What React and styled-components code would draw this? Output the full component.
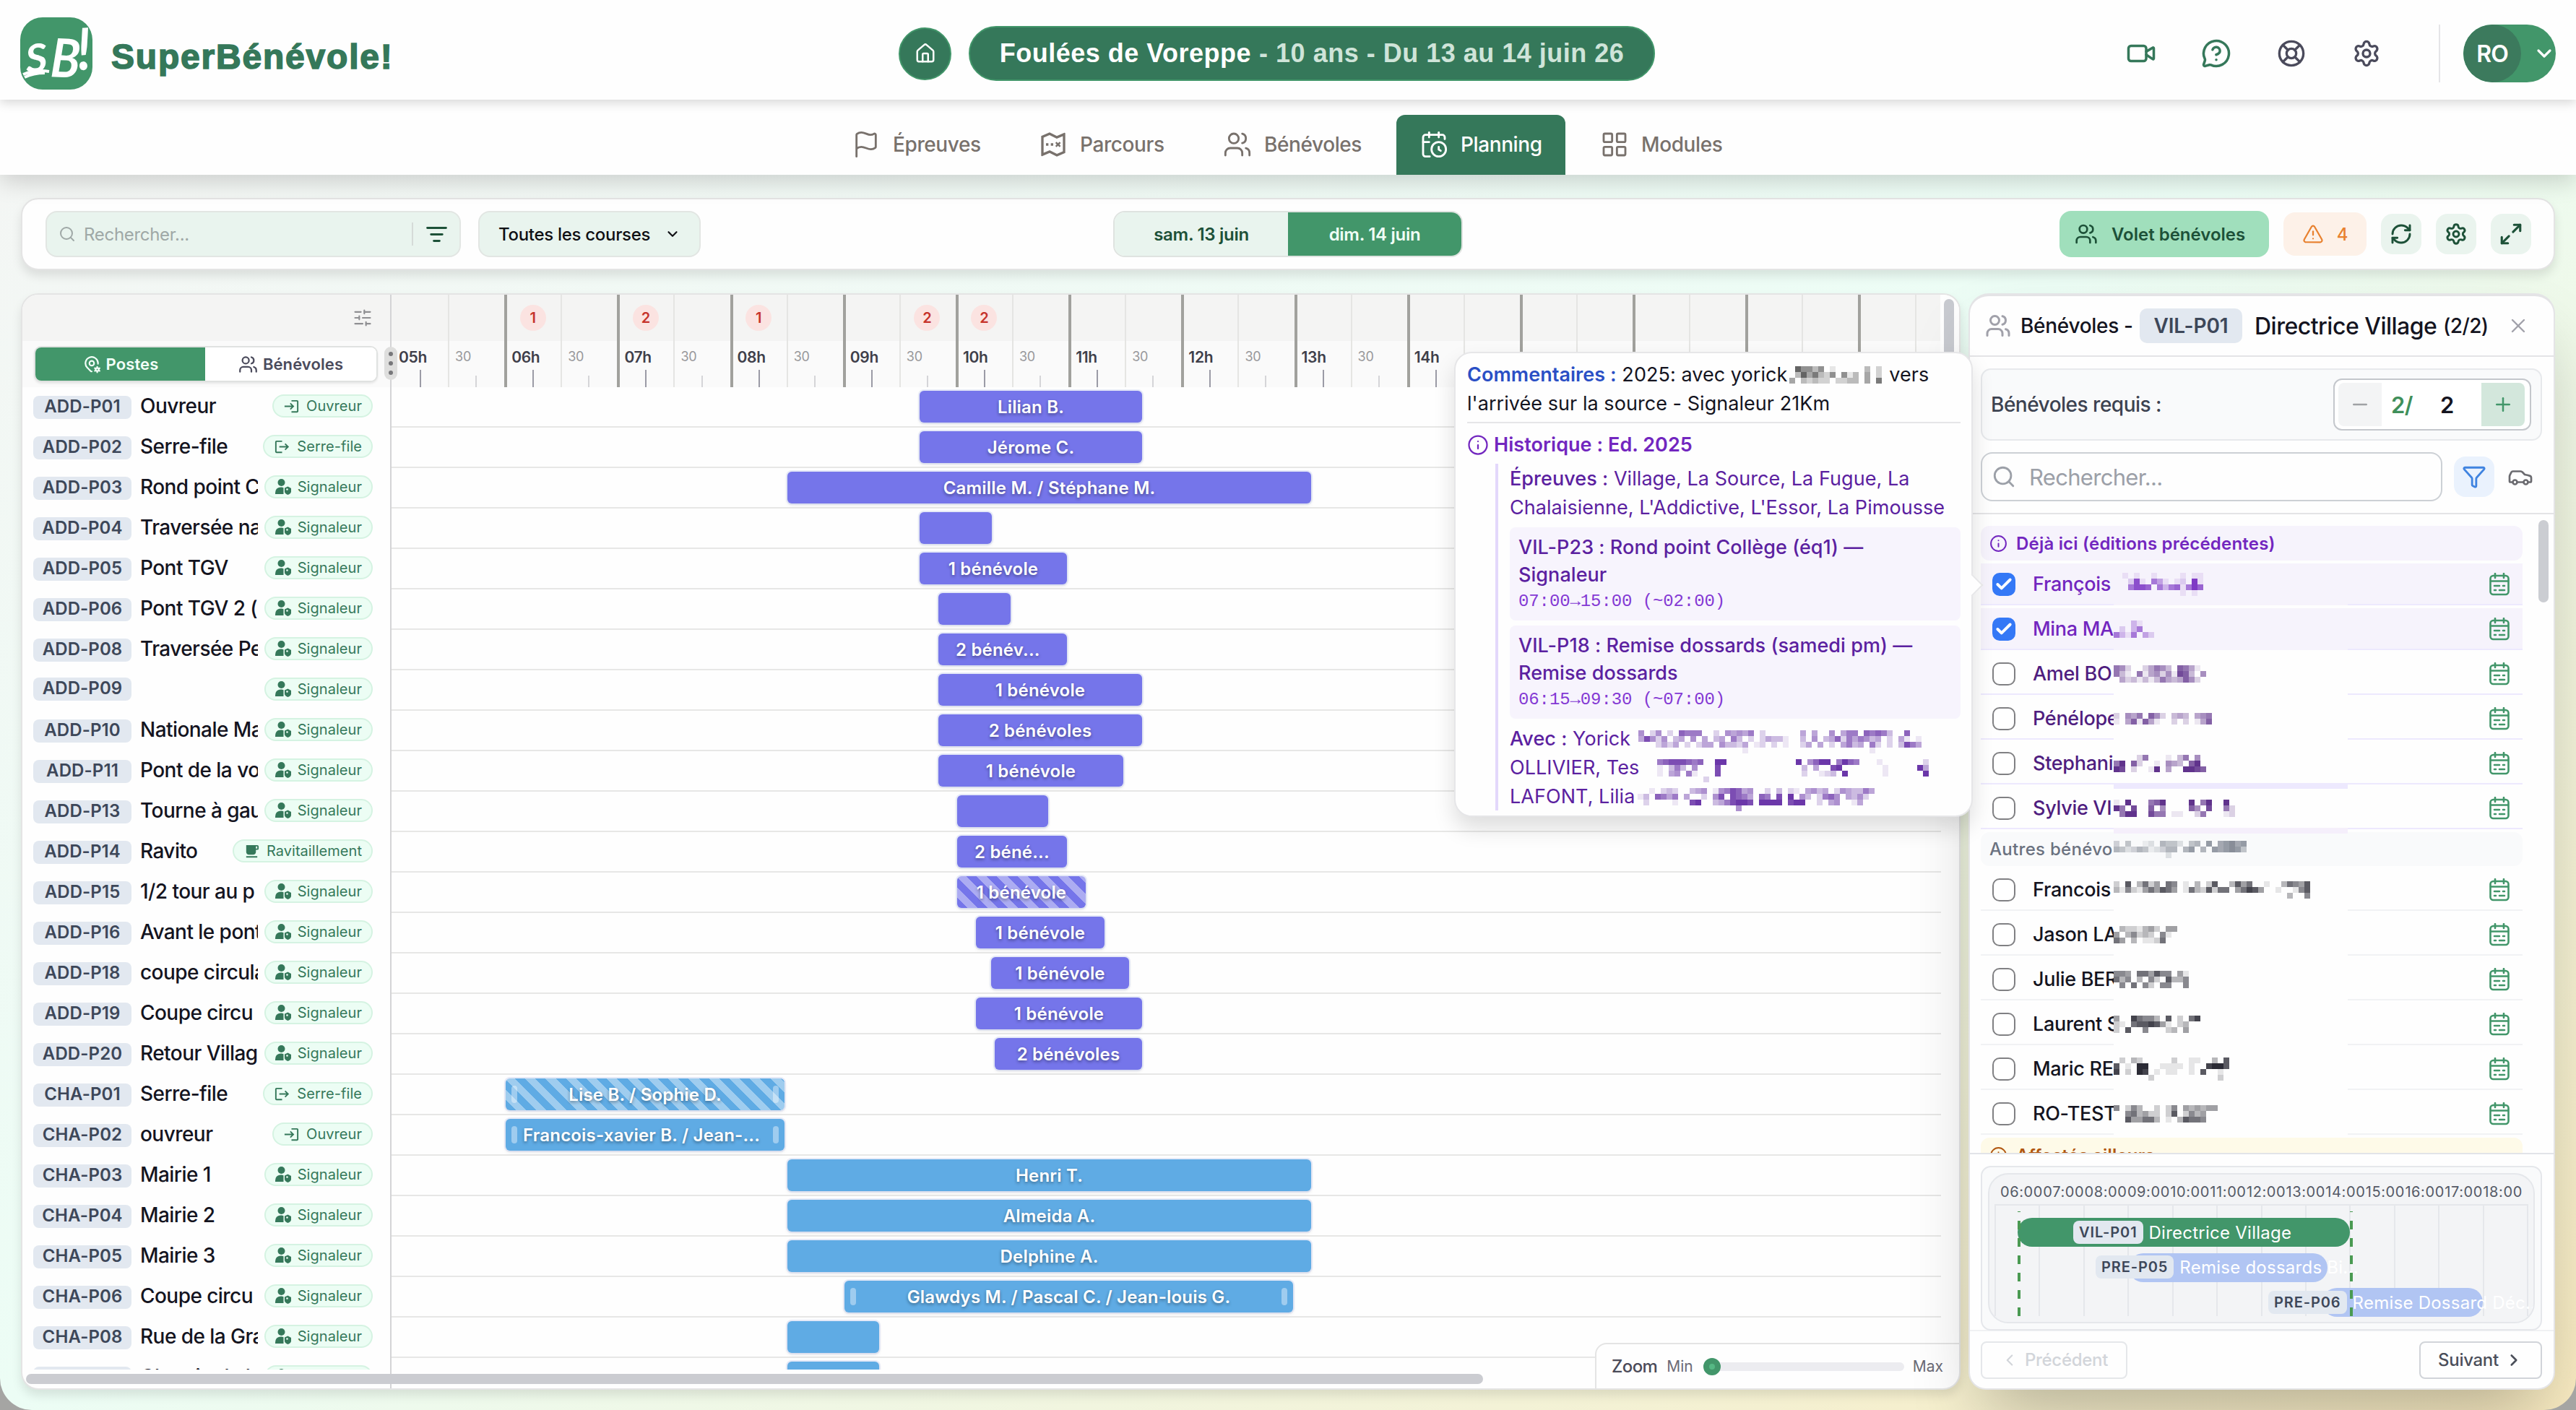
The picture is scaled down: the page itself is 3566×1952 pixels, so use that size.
import React, { useState } from 'react'
import styled, { createGlobalStyle, css } from 'styled-components'
import {
    Users, CalendarClock, Flag, LayoutGrid, Video, MessageCircleQuestion, LifeBuoy, Settings,
    House, ChevronDown, ChevronLeft, ChevronRight, Search, RefreshCw, Maximize2, TriangleAlert,
    X, Minus, Plus, Funnel, Car, Info, SlidersHorizontal, ListFilter, Check,
} from 'lucide-react'
import { RiTreasureMapLine } from 'react-icons/ri'
import { TbMapPinCog } from 'react-icons/tb'
import { MdLocalCafe, MdLogin, MdLogout } from 'react-icons/md'

const TIMELINE_LEFT = 542
const HALF_HOUR = 78.1

const SIG = 'Signaleur'

// [code, name, role, bar start, bar end, bar label, options]
const rows = [
    ['ADD-P01', 'Ouvreur', 'Ouvreur', 1273, 1581, 'Lilian B.'],
    ['ADD-P02', 'Serre-file', 'Serre-file', 1273, 1581, 'Jérome C.'],
    ['ADD-P03', 'Rond point C', SIG, 1090, 1815, 'Camille M. / Stéphane M.'],
    ['ADD-P04', 'Traversée na', SIG, 1273, 1373, ''],
    ['ADD-P05', 'Pont TGV', SIG, 1273, 1477, '1 bénévole'],
    ['ADD-P06', 'Pont TGV 2 (', SIG, 1299, 1399, ''],
    ['ADD-P08', 'Traversée Pe', SIG, 1299, 1477, '2 bénév...', { start: true }],
    ['ADD-P09', '', SIG, 1299, 1581, '1 bénévole'],
    ['ADD-P10', 'Nationale Ma', SIG, 1299, 1581, '2 bénévoles'],
    ['ADD-P11', 'Pont de la vo', SIG, 1299, 1555, '1 bénévole'],
    ['ADD-P13', 'Tourne à gau', SIG, 1325, 1451, ''],
    ['ADD-P14', 'Ravito', 'Ravitaillement', 1325, 1477, '2 béné...', { start: true }],
    ['ADD-P15', '1/2 tour au p', SIG, 1325, 1503, '1 bénévole', { striped: true }],
    ['ADD-P16', 'Avant le pont', SIG, 1351, 1529, '1 bénévole'],
    ['ADD-P18', 'coupe circula', SIG, 1372, 1563, '1 bénévole'],
    ['ADD-P19', 'Coupe circu', SIG, 1351, 1581, '1 bénévole'],
    ['ADD-P20', 'Retour Villag', SIG, 1377, 1581, '2 bénévoles'],
    ['CHA-P01', 'Serre-file', 'Serre-file', 700, 1086, 'Lise B. / Sophie D.', { striped: true, grips: true }],
    ['CHA-P02', 'ouvreur', 'Ouvreur', 700, 1086, 'Francois-xavier B. / Jean-...', { start: true, grips: true }],
    ['CHA-P03', 'Mairie 1', SIG, 1090, 1815, 'Henri T.'],
    ['CHA-P04', 'Mairie 2', SIG, 1090, 1815, 'Almeida A.'],
    ['CHA-P05', 'Mairie 3', SIG, 1090, 1815, 'Delphine A.'],
    ['CHA-P06', 'Coupe circu', SIG, 1169, 1790, 'Glawdys M. / Pascal C. / Jean-louis G.', { grips: true }],
    ['CHA-P08', 'Rue de la Gra', SIG, 1090, 1217, ''],
    ['CHA-P09', 'Chemin de l', SIG, 1090, 1217, ''],
]

const slots = Array.from({ length: 28 }, (_, i) => ({
    hour: i % 2 === 0,
    label: i % 2 === 0 ? String(5 + i / 2).padStart(2, '0') + 'h' : '30',
    count: { 2: 1, 4: 2, 6: 1, 9: 2, 10: 2 }[i],
}))

const known = [
    { name: 'François', checked: true, x: 12, mask: ['1.1..1....1.11', '.281.641.12.91', '.6887.63671697', '..........1.1.'] },
    { name: 'Mina MA', checked: true, x: 0, mask: ['...31', '.2.36', '6316.42'] },
    { name: 'Amel BO', x: 0, mask: ['652..24653.7641', '631.6145251873.5', '.42313136434752'] },
    { name: 'Pénélope', x: 0, mask: ['2.546.752.343.456', '1.471741..2.2.147'] },
    { name: 'Stephani', x: 0, mask: ['....26...1.36.5', '69.72..1.543.79', '98.2..19.4..9987'], band: '#ede9fe' },
    { name: 'Sylvie VI', x: 0, mask: ['1.9...679....9.69..9', '96.8..7.5....75.8..62', '.699..866.11..26...12'], band: '#f5effb' },
]

const others = [
    { name: 'Francois', x: 0, mask: ['2.7.3624.65.1.3.27..3746..1..36547', '31521464764.16327266.46874..1..157', '..............................3..5'] },
    { name: 'Jason LA', x: 0, mask: ['.3221342.44', '4.35232.51.', '64.3.1126..'] },
    { name: 'Julie BER', x: 0, mask: ['554.664755.41', '635.3.52.7335', '.5.6.52.55..5'] },
    { name: 'Laurent S', x: 0, mask: ['4..86553.7.2.68', '21.6778741.23', '2.7..5...23.4'] },
    { name: 'Maric RE', x: 0, mask: ['.2.32.....2..11..3.7', '7.1.99..1111.1..8997', '8.2.98.1.11..1.7..1', '......2...........2'] },
    { name: 'RO-TEST', x: 0, mask: ['5.253..2.25.434344', '..563422.27.2534', '..744663.1.37665'] },
]

const miniHours = ['06:00', '07:00', '08:00', '09:00', '10:00', '11:00', '12:00', '13:00', '14:00', '15:00', '16:00', '17:00', '18:00']

// Blocks that hide the last names
function Mask({ rows, color, x = 0 }) {
    return (
        <MaskSvg $x={x} width={rows[0].length * 8 + 24} height={rows.length * 8} fill={color}>
            {rows.map((line, r) => line.split('').map((v, c) => (
                v === '.' ? null : <rect key={r + '-' + c} x={c * 8} y={r * 8} width="8" height="8" opacity={Number(v) / 10} />
            )))}
        </MaskSvg>
    )
}

function CalendarList() {
    return (
        <svg width="28" height="32" viewBox="0 0 28 32" fill="none" stroke="#42966a" strokeWidth="2.6" strokeLinecap="round">
            <rect x="1.5" y="4" width="25" height="26" rx="4" />
            <path d="M2 11.5h24M8 1v6M20 1v6M7 18h7M19 18h2M7 24h2M14 24h7" />
        </svg>
    )
}

function RoleIcon({ role }) {
    if (role === 'Ouvreur') return <MdLogin size={23} />
    if (role === 'Serre-file') return <MdLogout size={23} />
    if (role === 'Ravitaillement') return <MdLocalCafe size={23} />
    return (
        <svg width="22" height="22" viewBox="0 0 22 22" fill="currentColor">
            <ellipse cx="8.5" cy="5" rx="5" ry="5" />
            <path d="M0 21c0-6 2-9.500 8-9.500 1.500 0 2.500.3 3.500.8v8.700z" />
            <path d="M13 12.500l4.500-2 4.500 2.500v4.500c0 2-2 4-4.500 4.500-2.500-.5-4.500-2.500-4.500-4.500z" />
            <circle cx="16.500" cy="14.500" r="1.300" fill="#ecfdf5" />
        </svg>
    )
}

function VolunteerRow({ v, color, line, tinted }) {
    return (
        <PersonRow $line={line} $tinted={tinted}>
            <CheckBox $on={v.checked}>{v.checked && <Check size={26} strokeWidth={3.6} />}</CheckBox>
            <PersonName $color={color}>{v.name}</PersonName>
            <Mask rows={v.mask} color={color} x={v.x} />
            <CalendarSlot><CalendarList /></CalendarSlot>
            {v.band && <Band $color={v.band} />}
        </PersonRow>
    )
}

function App() {
    const [day, setDay] = useState('dim')
    const [view, setView] = useState('postes')

    return (
        <Page>
            <GlobalStyle />
            <Header>
                <Brand>
                    <svg width="100" height="100" viewBox="0 0 100 100">
                        <rect width="100" height="100" rx="31" fill="#42966a" />
                        <path d="M4 79 Q 22 72 40 75 M6 83 Q 18 77 34 77" stroke="#fff" strokeWidth="4" fill="none" />
                        <g fill="#fff" fontFamily="Lato" fontStyle="italic" fontWeight="700">
                            <text fontSize="54" transform="translate(9 77) rotate(-5) scale(1.08 1)">S</text>
                            <text fontSize="74" transform="translate(41 82) rotate(3) scale(0.9 1)">B</text>
                            <text fontSize="80" transform="translate(80 73) rotate(-3) scale(0.9 1)">!</text>
                        </g>
                    </svg>
                    <BrandName>SuperBénévole!</BrandName>
                </Brand>
                <EventGroup>
                    <HomeButton><House size={30} strokeWidth={2} /></HomeButton>
                    <EventPill>
                        <b>Foulées de Voreppe</b>
                        <span>- 10 ans - Du 13 au 14 juin 26</span>
                    </EventPill>
                </EventGroup>
                <HeaderActions>
                    <HeaderIcon $green><Video size={42} strokeWidth={2} /></HeaderIcon>
                    <HeaderIcon $green><MessageCircleQuestion size={42} strokeWidth={2} /></HeaderIcon>
                    <HeaderIcon><LifeBuoy size={40} strokeWidth={2} /></HeaderIcon>
                    <HeaderIcon><Settings size={40} strokeWidth={2} /></HeaderIcon>
                    <Separator />
                    <Profile>
                        <Avatar>RO</Avatar>
                        <ChevronDown size={32} strokeWidth={2.4} />
                    </Profile>
                </HeaderActions>
            </Header>

            <Nav>
                <Tab $w={243}><Flag size={40} strokeWidth={1.7} /><span>Épreuves</span></Tab>
                <Tab $w={239}><RiTreasureMapLine size={40} /><span>Parcours</span></Tab>
                <Tab $w={256}><Users size={40} strokeWidth={1.7} /><span>Bénévoles</span></Tab>
                <Tab $w={234} $active><CalendarClock size={40} strokeWidth={1.7} /><span>Planning</span></Tab>
                <Tab $w={234}><LayoutGrid size={40} strokeWidth={1.7} /><span>Modules</span></Tab>
            </Nav>

            <Main>
                <Toolbar>
                    <SearchField>
                        <Search size={24} strokeWidth={2} />
                        <span>Rechercher...</span>
                        <FilterSlot><ListFilter size={31} strokeWidth={2.2} /></FilterSlot>
                    </SearchField>
                    <CourseSelect>Toutes les courses <ChevronDown size={22} strokeWidth={2.4} /></CourseSelect>
                    <DayToggle>
                        <Day $active={day === 'sam'} onClick={() => setDay('sam')}>sam. 13 juin</Day>
                        <Day $active={day === 'dim'} onClick={() => setDay('dim')}>dim. 14 juin</Day>
                    </DayToggle>
                    <ToolbarRight>
                        <PanelButton><Users size={32} strokeWidth={2} />Volet bénévoles</PanelButton>
                        <WarnButton><TriangleAlert size={30} strokeWidth={1.8} />4</WarnButton>
                        <SquareButton><RefreshCw size={32} strokeWidth={2.2} /></SquareButton>
                        <SquareButton><Settings size={32} strokeWidth={2.2} /></SquareButton>
                        <SquareButton><Maximize2 size={34} strokeWidth={2.2} /></SquareButton>
                    </ToolbarRight>
                </Toolbar>

                <Content>
                    <Planning>
                        <PlanningHead>
                            <LeftHead>
                                <LeftTop><SlidersHorizontal size={28} strokeWidth={1.8} /></LeftTop>
                                <LeftBottom>
                                    <ViewToggle>
                                        <ViewButton $w={235} $active={view === 'postes'} onClick={() => setView('postes')}>
                                            <TbMapPinCog size={26} />Postes
                                        </ViewButton>
                                        <ViewButton $w={237} $active={view === 'benevoles'} onClick={() => setView('benevoles')}>
                                            <Users size={27} strokeWidth={2} />Bénévoles
                                        </ViewButton>
                                    </ViewToggle>
                                </LeftBottom>
                                <Handle><i /><i /><i /></Handle>
                            </LeftHead>
                            <Hours>
                                {slots.map((s, i) => (
                                    <Slot key={i} $hour={s.hour}>
                                        <SlotTop>{s.count && <Count>{s.count}</Count>}</SlotTop>
                                        <SlotLabel $hour={s.hour}>{i < 19 && s.label}</SlotLabel>
                                        <Tick $hour={s.hour} />
                                    </Slot>
                                ))}
                            </Hours>
                            <VScroll><i /></VScroll>
                        </PlanningHead>
                        <PlanningBody>
                            {rows.map(([code, name, role, from, to, label, opt = {}]) => (
                                <Row key={code}>
                                    <RowInfo>
                                        <Code $raised={!name}>{code}</Code>
                                        <Name>{name}</Name>
                                        <Role><RoleIcon role={role} />{role}</Role>
                                    </RowInfo>
                                    <Lane>
                                        <Bar
                                            $blue={code.startsWith('CHA')}
                                            $striped={opt.striped}
                                            $start={opt.start}
                                            style={{ marginLeft: from - TIMELINE_LEFT, width: to - from }}
                                        >
                                            {opt.grips && <Grip $side="left" />}
                                            {label}
                                            {opt.grips && <Grip $side="right" />}
                                        </Bar>
                                    </Lane>
                                </Row>
                            ))}
                        </PlanningBody>
                        <HScroll><i /></HScroll>
                        <ZoomBox>
                            <b>Zoom</b>
                            <span>Min</span>
                            <Track><Knob /></Track>
                            <span>Max</span>
                        </ZoomBox>
                    </Planning>

                    <Panel>
                        <PanelHead>
                            <Users size={36} strokeWidth={2} color="#a1a1aa" />
                            <PanelTitle>Bénévoles -</PanelTitle>
                            <PanelCode>VIL-P01</PanelCode>
                            <PanelPost>Directrice Village</PanelPost>
                            <PanelCount>(2/2)</PanelCount>
                            <X size={32} strokeWidth={1.8} color="#a1a1aa" />
                        </PanelHead>

                        <Controls>
                            <Required>
                                <span>Bénévoles requis :</span>
                                <Stepper>
                                    <StepButton><Minus size={30} strokeWidth={2} /></StepButton>
                                    <StepDone>2/</StepDone>
                                    <StepTotal>2</StepTotal>
                                    <StepButton $plus><Plus size={30} strokeWidth={2} /></StepButton>
                                </Stepper>
                            </Required>
                            <SearchRow>
                                <PanelSearch><Search size={34} strokeWidth={2} />Rechercher...</PanelSearch>
                                <FunnelButton><Funnel size={34} strokeWidth={2} /></FunnelButton>
                                <Car size={36} strokeWidth={1.8} color="#6b6b70" />
                            </SearchRow>
                        </Controls>

                        <List>
                            <People>
                                <SectionTitle $tone="purple"><Info size={25} strokeWidth={1.9} />Déjà ici (éditions précédentes)</SectionTitle>
                                {known.map(v => (
                                    <VolunteerRow
                                        key={v.name}
                                        v={v}
                                        tinted={v.checked}
                                        color={v.checked ? '#7226bf' : '#4f1d7f'}
                                        line="#ede9fe"
                                    />
                                ))}
                                <SectionTitle $tone="gray">
                                    <Clip>Autres bénévo</Clip>
                                    <Mask rows={['3.4..12.5442.45.7.67867', '54235412355.57.5.767874', '.........2']} color="#6b7280" />
                                </SectionTitle>
                                {others.map(v => <VolunteerRow key={v.name} v={v} color="#14141f" line="#f1f2f4" />)}
                                <SectionTitle $tone="amber"><Info size={25} strokeWidth={1.9} />Affectés ailleurs</SectionTitle>
                            </People>
                            <ListThumb />
                        </List>

                        <MiniWrap>
                            <MiniCard>
                                <MiniInner>
                                    <MiniHours>{miniHours.map(h => <span key={h}>{h}</span>)}</MiniHours>
                                    <MiniGrid>
                                        {miniHours.slice(1).map(h => <i key={h} />)}
                                        <MiniBar $x={30} $y={17} $w={460} $green />
                                        <MiniBar $x={184} $y={66} $w={275} />
                                        <MiniBar $x={452} $y={114} $w={222} />
                                        <MiniLabel $x={109} $y={21}><b>VIL-P01</b><span>Directrice Village</span></MiniLabel>
                                        <MiniLabel $x={140} $y={69}><b>PRE-P05</b><span>Remise dossards Bi...</span></MiniLabel>
                                        <MiniLabel $x={379} $y={118}><b>PRE-P06</b><span>Remise Dossard Déc...</span></MiniLabel>
                                        <Dashed $x={32} />
                                        <Dashed $x={492} />
                                    </MiniGrid>
                                </MiniInner>
                            </MiniCard>
                        </MiniWrap>
                        <PanelFoot>
                            <FootButton $disabled><ChevronLeft size={26} strokeWidth={2} />Précédent</FootButton>
                            <FootButton>Suivant<ChevronRight size={26} strokeWidth={2.4} /></FootButton>
                        </PanelFoot>
                    </Panel>
                </Content>
            </Main>

            <Popover>
                <Comment>
                    <b>Commentaires :</b> 2025: avec yorick
                    <InlineMask $w={141}><Mask rows={['.75535.1.....3.2', '.3746325.513.4.2', '4.32322.2233.4.6']} color="#222" x={3} /></InlineMask>
                    vers<br />l'arrivée sur la source - Signaleur 21Km
                </Comment>
                <HistoryTitle><Info size={30} strokeWidth={1.8} />Historique : Ed. 2025</HistoryTitle>
                <History>
                    <p><b>Épreuves :</b> Village, La Source, La Fugue, La<br />Chalaisienne, L'Addictive, L'Essor, La Pimousse</p>
                    <PastPost>
                        VIL-P23 : Rond point Collège (éq1) —<br />Signaleur
                        <code>07:00→15:00 (~02:00)</code>
                    </PastPost>
                    <PastPost>
                        VIL-P18 : Remise dossards (samedi pm) —<br />Remise dossards
                        <code>06:15→09:30 (~07:00)</code>
                    </PastPost>
                    <p>
                        <b>Avec :</b> Yorick
                        <InlineMask $w={400}><Mask x={11} color="#5b21a0" rows={['5.25.2.7666..2.54546.2......4.4..5.466.76763..7', '48525.34.5.4.34.63.2.24331..3.5.3472646534.2.41.1', '...2424.2.244.53324.12.2.1..24.4.2.4634.62.2.3864', '..................1.....................1']} /></InlineMask>
                        <br />OLLIVIER, Tes
                        <InlineMask $w={420}><Mask x={25} color="#5b21a0" rows={['67888767..99............9.5799.6976...1.......2', '1.363.5...8..............3.4..89.......1.....94', '1.45.61...8..............2..123.9......1......9', '........2']} /></InlineMask>
                        <br />LAFONT, Lilia
                        <InlineMask $w={400}><Mask x={4} color="#5b21a0" rows={['..1.232..345.1568745..2.3.21.4534.2543364', '13.7646.4..2.58.8764.76.8.9.53.2675.4352.', '.2....1..89..3468998.9999.899..2.45..14..', '.................5']} /></InlineMask>
                    </p>
                </History>
                <Arrow />
            </Popover>
        </Page>
    )
}

export default App

const GlobalStyle = createGlobalStyle`
    * {
        box-sizing: border-box;
    }

    body {
        margin: 0;
        background: #a5a5a3;
        font-family: Inter, 'Liberation Sans', sans-serif;
        color: #14141f;
    }

    p {
        margin: 0;
    }
`

const Page = styled.div`
    position: relative;
    width: 3566px;
    height: 1952px;
    display: flex;
    flex-direction: column;
    overflow: hidden;
    border-radius: 0 0 44px 44px;
    background: linear-gradient(to bottom right, #f5f5f4, #ecfdf5 50%, #f8eac0);
`

const Header = styled.header`
    position: relative;
    z-index: 3;
    flex: none;
    height: 138px;
    padding: 0 28px;
    display: grid;
    grid-template-columns: 1216px 1fr auto;
    align-items: center;
    background: #fefefe;
    box-shadow: 0 4px 14px rgba(0, 0, 0, 0.16);
`

const Brand = styled.div`
    display: flex;
    align-items: center;
    gap: 26px;
    padding-top: 10px;
`

const BrandName = styled.div`
    font-family: 'Liberation Sans', sans-serif;
    font-size: 48px;
    font-weight: 700;
    letter-spacing: 1.8px;
    color: #35785a;
    -webkit-text-stroke: 1.6px #35785a;
    stroke-linejoin: round;
    padding-top: 9px;
`

const EventGroup = styled.div`
    display: flex;
    align-items: center;
    gap: 24px;
    padding-top: 10px;
`

const HomeButton = styled.button`
    width: 73px;
    height: 73px;
    padding: 0;
    display: flex;
    align-items: center;
    justify-content: center;
    border: 2px solid #42966a;
    border-radius: 50%;
    background: #35785a;
    color: #fff;
`

const EventPill = styled.div`
    width: 950px;
    height: 76px;
    display: flex;
    align-items: center;
    justify-content: center;
    gap: 11px;
    border: 2px solid #42966a;
    border-radius: 38px;
    background: #35785a;
    color: #fff;
    font-family: 'Liberation Sans', sans-serif;
    font-size: 36px;
    font-weight: 700;
    letter-spacing: 0.5px;
    white-space: nowrap;

    span {
        color: #cfe4d9;
    }
`

const HeaderActions = styled.div`
    display: flex;
    align-items: center;
    padding-top: 10px;
`

const HeaderIcon = styled.div`
    width: 104px;
    display: flex;
    justify-content: center;
    color: ${props => props.$green ? '#35785a' : '#4b4b5c'};
`

const Separator = styled.div`
    width: 2px;
    height: 80px;
    margin: 0 32px 0 48px;
    background: #e5e5e8;
`

const Profile = styled.div`
    width: 128px;
    height: 80px;
    display: flex;
    align-items: center;
    gap: 16px;
    border-radius: 40px;
    background: #42966a;
    color: #fff;
    overflow: hidden;
`

const Avatar = styled.div`
    flex: none;
    width: 80px;
    height: 80px;
    display: flex;
    align-items: center;
    justify-content: center;
    border-radius: 50%;
    background: #3c7a5d;
    font-size: 32px;
    font-weight: 600;
    letter-spacing: -1px;
`

const Nav = styled.nav`
    position: relative;
    z-index: 2;
    flex: none;
    height: 104px;
    padding-right: 2px;
    display: flex;
    justify-content: center;
    align-items: flex-end;
    gap: 16px;
    background: #fefefe;
    box-shadow: 0 10px 30px rgba(0, 0, 0, 0.16);
`

const Tab = styled.div`
    width: ${props => props.$w}px;
    height: 83px;
    padding: 0 0 2px 32px;
    display: flex;
    align-items: center;
    gap: 17px;
    border-radius: 12px 12px 0 0;
    font-size: 28px;
    font-weight: 500;
    letter-spacing: -0.4px;
    white-space: nowrap;
    color: ${props => props.$active ? '#fff' : '#78716c'};
    background: ${props => props.$active ? '#35785a' : 'none'};

    svg {
        flex: none;
    }
`

const Main = styled.main`
    flex: 1;
    min-height: 0;
    padding: 32px 29px 28px;
    display: flex;
    flex-direction: column;
    gap: 32px;
`

const card = css`
    border: 2px solid #e4e4e4;
    border-radius: 24px;
    background: #fefefe;
    box-shadow: 0 8px 14px rgba(0, 0, 0, 0.1);
`

const Toolbar = styled.div`
    ${card}
    flex: none;
    height: 100px;
    padding: 0 32px;
    display: flex;
    align-items: center;
    font-size: 24px;
    font-weight: 600;
    letter-spacing: -0.3px;
`

const SearchField = styled.div`
    width: 575px;
    height: 64px;
    padding-left: 16px;
    display: flex;
    align-items: center;
    gap: 11px;
    border: 2px solid #e2e6e3;
    border-radius: 16px;
    background: #e9f4ee;
    color: #9fa8a6;
    font-weight: 400;
`

const FilterSlot = styled.div`
    margin-left: auto;
    width: 66px;
    height: 32px;
    display: flex;
    align-items: center;
    justify-content: center;
    border-left: 2px solid #d5dbd8;
    color: #1d5138;
`

const CourseSelect = styled.div`
    width: 308px;
    height: 64px;
    margin-left: 24px;
    padding: 0 26px;
    display: flex;
    align-items: center;
    justify-content: space-between;
    border: 2px solid #e2e6e3;
    border-radius: 16px;
    background: #e9f4ee;
    color: #101014;
    white-space: nowrap;
    font-weight: 500;
`

const DayToggle = styled.div`
    width: 484px;
    height: 64px;
    margin-left: 571px;
    display: flex;
    border: 2px solid #dfe3e0;
    border-radius: 16px;
    overflow: hidden;
`

const Day = styled.div`
    flex: 1;
    display: flex;
    align-items: center;
    justify-content: center;
    color: ${props => props.$active ? '#f0fff6' : '#1d5138'};
    background: ${props => props.$active ? '#42966a' : '#e9f4ee'};
`

const ToolbarRight = styled.div`
    margin: 0 -1px 0 auto;
    display: flex;
    align-items: center;
    gap: 20px;
`

const PanelButton = styled.div`
    width: 290px;
    height: 64px;
    padding-left: 21px;
    display: flex;
    align-items: center;
    gap: 19px;
    border-radius: 16px;
    background: #a0dfbc;
    color: #1d5138;
    white-space: nowrap;
    letter-spacing: 0;
`

const WarnButton = styled.div`
    width: 115px;
    height: 60px;
    display: flex;
    align-items: center;
    justify-content: center;
    gap: 18px;
    border-radius: 16px;
    background: #fdf1e8;
    color: #e8812f;
    font-weight: 500;
`

const SquareButton = styled.div`
    width: 56px;
    height: 56px;
    display: flex;
    align-items: center;
    justify-content: center;
    border-radius: 16px;
    background: #eaf4ee;
    color: #1d5138;
`

const Content = styled.div`
    flex: 1;
    min-height: 0;
    display: flex;
    gap: 11px;
`

const Planning = styled.section`
    ${card}
    position: relative;
    width: 2685px;
    flex: none;
    display: flex;
    flex-direction: column;
    overflow: hidden;
`

const PlanningHead = styled.div`
    flex: none;
    height: 128px;
    display: flex;
    background: linear-gradient(#f4f4f3 64px, #fafafa 64px);
`

const LeftHead = styled.div`
    position: relative;
    width: 511px;
    flex: none;
    border-right: 2px solid #d4d4d6;
`

const LeftTop = styled.div`
    height: 64px;
    padding: 0 24px 0 0;
    display: flex;
    align-items: center;
    justify-content: flex-end;
    color: #8f8f92;
`

const LeftBottom = styled.div`
    height: 64px;
    padding: 7px 16px 0;
`

const ViewToggle = styled.div`
    width: 476px;
    height: 50px;
    display: flex;
    border: 2px solid #e0e2e1;
    border-radius: 10px;
    overflow: hidden;
    background: #fff;
    box-shadow: 0 2px 3px rgba(0, 0, 0, 0.08);
`

const ViewButton = styled.div`
    width: ${props => props.$w}px;
    display: flex;
    align-items: center;
    justify-content: center;
    gap: 7px;
    font-size: 22px;
    font-weight: 600;
    letter-spacing: 0.1px;
    color: ${props => props.$active ? '#f2fff8' : '#4b4b5c'};
    background: ${props => props.$active ? '#42966a' : '#fff'};
`

const Handle = styled.div`
    position: absolute;
    z-index: 2;
    right: -10px;
    top: 72px;
    width: 18px;
    height: 46px;
    display: flex;
    flex-direction: column;
    align-items: center;
    justify-content: space-evenly;
    border-radius: 9px;
    background: #dededd;

    i {
        width: 6px;
        height: 6px;
        border-radius: 50%;
        background: #77777a;
    }
`

const Hours = styled.div`
    flex: 1;
    min-width: 0;
    display: flex;
    overflow: hidden;
`

const Slot = styled.div`
    flex: none;
    width: ${HALF_HOUR}px;
    display: grid;
    grid-template-rows: 64px 40px 24px;
    border-left: ${props => props.$hour ? '4px solid #a1a19d' : '2px solid #e5e5e3'};

    &:first-child {
        border-left-color: transparent;
    }
`

const SlotTop = styled.div`
    display: flex;
    align-items: center;
    justify-content: center;
`

const Count = styled.div`
    width: 36px;
    height: 36px;
    margin-right: 3px;
    display: flex;
    align-items: center;
    justify-content: center;
    border-radius: 50%;
    background: #fbe3e1;
    color: #c6332b;
    font-size: 20px;
    font-weight: 600;
`

const SlotLabel = styled.div`
    padding: ${props => props.$hour ? '11px 0 0 6px' : '10px 0 0 8px'};
    font-size: ${props => props.$hour ? 21 : 18}px;
    font-weight: ${props => props.$hour ? 600 : 400};
    line-height: 24px;
    letter-spacing: -0.3px;
    color: ${props => props.$hour ? '#3f3f4a' : '#98989b'};
`

const Tick = styled.div`
    align-self: end;
    justify-self: center;
    width: 2px;
    height: ${props => props.$hour ? 24 : 16}px;
    margin-right: 2px;
    background: ${props => props.$hour ? '#9b9ba6' : '#d5d5d8'};
`

const VScroll = styled.div`
    position: relative;
    flex: none;
    width: 26px;
    background: #fefefe;

    i {
        position: absolute;
        left: 5px;
        top: 6px;
        width: 14px;
        height: 260px;
        border-radius: 7px;
        background: #c8cad0;
    }
`

const PlanningBody = styled.div`
    height: 1360px;
    flex: none;
    overflow: hidden;
`

const Row = styled.div`
    height: 56px;
    display: flex;
`

const RowInfo = styled.div`
    flex: none;
    width: 511px;
    padding: 0 24px 0 15px;
    display: flex;
    align-items: center;
    border-right: 2px solid #d4d4d6;
`

const Code = styled.div`
    flex: none;
    width: 136px;
    height: 32px;
    margin-bottom: ${props => props.$raised ? 5 : 1}px;
    display: flex;
    align-items: center;
    justify-content: center;
    border-radius: 8px;
    background: #e2e8f0;
    color: #3d4759;
    font-size: 24px;
    font-weight: 600;
    line-height: 30px;
    letter-spacing: 0.1px;
    padding-bottom: 2px;
`

const Name = styled.div`
    flex: 1;
    margin: 0 9px 5px 12px;
    overflow: hidden;
    white-space: nowrap;
    font-size: 28px;
    font-weight: 500;
    line-height: 36px;
    letter-spacing: -0.55px;
`

const Role = styled.div`
    flex: none;
    height: 32px;
    margin-bottom: 4px;
    padding: 0 13px;
    display: flex;
    align-items: center;
    gap: 9px;
    border: 2px solid #d5f3e2;
    border-radius: 16px;
    background: #ecfdf4;
    color: #35785a;
    font-size: 20px;
    letter-spacing: 0.05px;
`

const Lane = styled.div`
    width: 2145px;
    padding-top: 5px;
    border-bottom: 2px solid #e7e7e6;
`

const Bar = styled.div`
    position: relative;
    height: 44px;
    padding: 0 24px;
    display: flex;
    align-items: center;
    justify-content: ${props => props.$start ? 'flex-start' : 'center'};
    border-radius: 6px;
    color: #fff;
    font-size: 24px;
    font-weight: 600;
    letter-spacing: 0.2px;
    white-space: nowrap;
    text-shadow: 0 2px 4px rgba(0, 0, 0, 0.4);
    box-shadow: 0 0 0 2px rgba(190, 200, 240, 0.35), 0 2px 5px rgba(0, 0, 0, 0.1);
    background-color: ${props => props.$blue ? '#5fabe4' : '#7575ea'};
    ${props => props.$striped && css`
        background-image: repeating-linear-gradient(45deg, transparent 0 10px, rgba(255, 255, 255, 0.4) 10px 20px);
    `}
`

const Grip = styled.i`
    position: absolute;
    top: 10px;
    ${props => props.$side}: 8px;
    width: 8px;
    height: 24px;
    border-radius: 4px;
    background: rgba(255, 255, 255, 0.4);
`

const HScroll = styled.div`
    flex: 1;
    padding: 6px 5px;
    display: flex;
    background: linear-gradient(to right, transparent 509px, #d4d4d6 509px 511px, transparent 511px);

    i {
        width: 2017px;
        height: 14px;
        border-radius: 7px;
        background: #cbccd1;
    }
`

const ZoomBox = styled.div`
    position: absolute;
    right: -2px;
    bottom: -2px;
    width: 506px;
    height: 65px;
    padding: 0 22px 0 21px;
    display: flex;
    align-items: center;
    border: 2px solid #e4e4e4;
    border-radius: 16px 0 24px 0;
    background: #fefefe;
    color: #6b6b76;
    font-size: 21px;

    b {
        margin-right: 13px;
        font-size: 24px;
        font-weight: 500;
        letter-spacing: -0.6px;
        color: #4b4b58;
    }
`

const Track = styled.div`
    flex: 1;
    height: 12px;
    margin: 0 12px 0 14px;
    display: flex;
    align-items: center;
    border-radius: 6px;
    background: #ececf0;
`

const Knob = styled.div`
    width: 24px;
    height: 24px;
    border: 8px solid #42966a;
    border-radius: 50%;
    background: #55b884;
`

const Panel = styled.aside`
    flex: 1;
    min-width: 0;
    display: flex;
    flex-direction: column;
    border: 2px solid #e4e4e6;
    border-top-width: 4px;
    border-radius: 28px 28px 24px 24px;
    background: #fefefe;
    overflow: hidden;
    box-shadow: 0 50px 100px -24px rgba(0, 0, 0, 0.28);
    position: relative;
`

const PanelHead = styled.div`
    flex: none;
    height: 84px;
    padding-left: 21px;
    display: flex;
    align-items: center;
    white-space: nowrap;
    border-bottom: 2px solid #e4e4e6;
    font-weight: 500;

    > svg:last-child {
        margin-left: 26px;
    }
`

const PanelTitle = styled.div`
    width: 165px;
    margin-left: 13px;
    font-size: 28px;
    letter-spacing: -0.3px;
`

const PanelCode = styled.div`
    width: 142px;
    height: 48px;
    display: flex;
    align-items: center;
    justify-content: center;
    border-radius: 10px;
    background: #e2e8f0;
    color: #3d4759;
    font-size: 28px;
    font-weight: 600;
    letter-spacing: -0.1px;
`

const PanelPost = styled.div`
    width: 261px;
    margin-left: 17px;
    font-size: 32px;
    letter-spacing: -0.5px;
`

const PanelCount = styled.div`
    width: 62px;
    font-size: 28px;
    letter-spacing: -0.6px;
`

const Controls = styled.div`
    flex: none;
    height: 218px;
    padding: 16px 16px 0 15px;
    border-bottom: 2px solid #e4e4e6;
`

const Required = styled.div`
    height: 100px;
    padding: 0 13px 0 12px;
    display: flex;
    align-items: center;
    justify-content: space-between;
    border: 2px solid #e7e9ec;
    border-radius: 14px;
    background: #f9fafb;
    color: #3c4250;
    font-size: 28px;
    font-weight: 500;
    letter-spacing: -0.5px;
`

const Stepper = styled.div`
    width: 274px;
    height: 72px;
    padding: 0 5px;
    display: flex;
    align-items: center;
    border: 2px solid #c4c7cc;
    border-radius: 12px;
    background: #fff;
    font-size: 31px;
    font-weight: 600;
`

const StepButton = styled.div`
    width: 60px;
    height: 60px;
    display: flex;
    align-items: center;
    justify-content: center;
    border-radius: ${props => props.$plus ? '0 8px 8px 0' : '8px 0 0 8px'};
    background: ${props => props.$plus ? '#d3e7dc' : '#f3f4f5'};
    color: ${props => props.$plus ? '#42966a' : '#9fa1a5'};
`

const StepDone = styled.span`
    width: 81px;
    padding-left: 13px;
    color: #3f8f5a;
`

const StepTotal = styled.span`
    width: 57px;
    color: #14141f;
`

const SearchRow = styled.div`
    margin-top: 16px;
    display: flex;
    align-items: center;

    > svg {
        margin-left: 18px;
    }
`

const PanelSearch = styled.div`
    width: 639px;
    height: 68px;
    padding-left: 13px;
    display: flex;
    align-items: center;
    gap: 18px;
    border: 2px solid #ccd0d5;
    border-radius: 16px;
    color: #9ca0a8;
    font-size: 31px;
    letter-spacing: -0.7px;
`

const FunnelButton = styled.div`
    width: 56px;
    height: 56px;
    margin-left: 16px;
    display: flex;
    align-items: center;
    justify-content: center;
    border-radius: 16px;
    background: #eaf2fd;
    color: #3f83e0;
`

const List = styled.div`
    flex: none;
    height: 884px;
    padding: 16px 0 0 15px;
    display: flex;
    overflow: hidden;
`

const People = styled.div`
    width: 750px;
    height: 1000px;
    display: flex;
    flex-direction: column;
    gap: 4px;
`

const tones = {
    purple: ['#f6f3fc', '#7226bf', 48],
    gray: ['#f9fafb', '#6b7280', 47],
    amber: ['#fefae8', '#b0560f', 48],
}

const SectionTitle = styled.div`
    flex: none;
    height: ${props => tones[props.$tone][2]}px;
    padding-left: 12px;
    display: flex;
    align-items: center;
    gap: 12px;
    border-radius: 12px;
    background: ${props => tones[props.$tone][0]};
    color: ${props => tones[props.$tone][1]};
    font-size: 24px;
    font-weight: 600;
    letter-spacing: 0.2px;
    white-space: nowrap;
    ${props => props.$tone === 'gray' && 'gap: 0; font-weight: 500; letter-spacing: 0.3px;'}
`

const Clip = styled.div`
    width: 172px;
    overflow: hidden;
    line-height: 36px;
`

const PersonRow = styled.div`
    position: relative;
    flex: none;
    height: 58px;
    padding: 0 18px 0 16px;
    display: flex;
    align-items: center;
    background: ${props => props.$tinted ? '#f6f3fc' : 'none'};

    &::after {
        content: '';
        position: absolute;
        left: 0;
        right: 0;
        bottom: 0;
        height: 2px;
        background: linear-gradient(to right, ${props => props.$line} 184px, transparent 184px 508px, ${props => props.$line} 508px);
    }
`

const CheckBox = styled.div`
    flex: none;
    width: 32px;
    height: 32px;
    display: flex;
    align-items: center;
    justify-content: center;
    border: ${props => props.$on ? 'none' : '2px solid #808083'};
    border-radius: 10px;
    background: ${props => props.$on ? '#3478f6' : '#fff'};
    color: #fff;
`

const PersonName = styled.div`
    flex: none;
    width: 112px;
    margin-left: 24px;
    overflow: hidden;
    white-space: nowrap;
    font-size: 27px;
    font-weight: 500;
    line-height: 36px;
    letter-spacing: -0.3px;
    color: ${props => props.$color};
`

const CalendarSlot = styled.div`
    margin-left: auto;
    height: 32px;
`

const Band = styled.div`
    position: absolute;
    left: 184px;
    bottom: -6px;
    width: 324px;
    height: 8px;
    background: ${props => props.$color};
`

const MaskSvg = styled.svg`
    display: block;
    flex: none;
    margin-left: ${props => props.$x}px;
    overflow: visible;
`

const ListThumb = styled.div`
    width: 14px;
    height: 114px;
    margin: -8px 0 0 22px;
    border-radius: 7px;
    background: #cbcdd2;
`

const MiniWrap = styled.div`
    flex: none;
    height: 247px;
    padding: 16px 16px 0 15px;
    border-top: 2px solid #e2e4e8;
    border-bottom: 2px solid #f0f1f3;
`

const MiniCard = styled.div`
    height: 228px;
    padding: 8px;
    border: 2px solid #e5e7eb;
    border-radius: 14px;
    background: #f9fafb;
`

const MiniInner = styled.div`
    height: 208px;
    padding: 0 7px;
    border: 2px solid #e5e7eb;
    border-radius: 28px;
    background: #f3f4f6;
    overflow: hidden;
`

const MiniHours = styled.div`
    height: 43px;
    padding: 6px 8px 0;
    display: flex;
    align-items: center;
    justify-content: space-between;
    border-bottom: 2px solid #e5e7eb;
    color: #555a66;
    font-size: 20px;
    letter-spacing: 0.6px;
`

const MiniGrid = styled.div`
    position: relative;
    height: 153px;
    display: grid;
    grid-template-columns: repeat(12, 1fr);
    border-left: 2px solid #e5e7eb;

    > i {
        border-right: 2px solid #e5e7eb;
    }
`

const MiniBar = styled.div`
    position: absolute;
    left: ${props => props.$x}px;
    top: ${props => props.$y}px;
    width: ${props => props.$w}px;
    height: 40px;
    border-radius: 20px;
    background: ${props => props.$green ? '#42966a' : '#b1c5f3'};
`

const MiniLabel = styled.div`
    position: absolute;
    left: ${props => props.$x - 2}px;
    top: ${props => props.$y}px;
    height: 32px;
    display: flex;
    align-items: center;
    gap: 8px;
    white-space: nowrap;
    color: #fff;
    font-size: 24px;
    letter-spacing: 0.25px;

    b {
        height: 32px;
        padding: 0 8px;
        border-radius: 8px;
        background: #e2e8f0;
        color: #3d4759;
        font-size: 20px;
        font-weight: 600;
        line-height: 33px;
        letter-spacing: 0.9px;
    }
`

const Dashed = styled.div`
    position: absolute;
    left: ${props => props.$x - 2}px;
    top: 8px;
    width: 4px;
    height: 145px;
    background: repeating-linear-gradient(to top, #4a9a52 0 12px, transparent 12px 24px);
`

const PanelFoot = styled.div`
    flex: 1;
    padding: 0 16px 0 15px;
    display: flex;
    align-items: center;
    justify-content: space-between;
`

const FootButton = styled.div`
    width: ${props => props.$disabled ? 203 : 170}px;
    height: 52px;
    display: flex;
    align-items: center;
    justify-content: center;
    gap: 8px;
    border: 2px solid ${props => props.$disabled ? '#e5e7ea' : '#d1d4d9'};
    border-radius: 8px;
    color: ${props => props.$disabled ? '#d2d5da' : '#4b4f5a'};
    font-size: 24px;
    font-weight: 500;
    letter-spacing: -0.3px;
`

const Popover = styled.div`
    position: absolute;
    z-index: 5;
    left: 2013px;
    top: 487px;
    width: 718px;
    height: 644px;
    padding: 10px 15px 8px 16px;
    border: 2px solid #e6e6e8;
    border-radius: 24px;
    background: #fefefe;
    box-shadow: 0 16px 30px rgba(0, 0, 0, 0.13);
    font-size: 27px;
    line-height: 40px;
    letter-spacing: 0.05px;
    white-space: nowrap;
`

const Comment = styled.div`
    height: 87px;
    border-bottom: 2px solid #e6e6e8;

    b {
        font-weight: 600;
        color: #2a4fc5;
    }
`

const HistoryTitle = styled.div`
    height: 56px;
    padding-top: 3px;
    display: flex;
    align-items: center;
    gap: 7px;
    font-weight: 600;
    color: #7226bf;
`

const History = styled.div`
    height: 480px;
    margin-left: 39px;
    padding-left: 16px;
    border-left: 4px solid #e3d8fb;
    color: #5b21a0;

    p {
        height: 88px;
        padding-top: 1px;
    }

    b {
        font-weight: 500;
    }
`

const PastPost = styled.div`
    height: 129px;
    margin-bottom: 7px;
    padding: 9px 12px;
    border-radius: 8px;
    background: #f7f4fd;
    font-weight: 500;
    line-height: 38px;

    code {
        display: block;
        font-family: 'Liberation Mono', monospace;
        font-size: 24px;
        font-weight: 400;
        line-height: 36px;
        letter-spacing: -0.1px;
        color: #8439d4;
    }
`

const InlineMask = styled.span`
    display: inline-block;
    width: ${props => props.$w}px;
    height: 24px;
    line-height: 0;
    vertical-align: -3px;
`

const Arrow = styled.div`
    position: absolute;
    right: -12px;
    top: 310px;
    width: 22px;
    height: 22px;
    transform: rotate(45deg);
    border: 2px solid #e6e6e8;
    border-width: 2px 2px 0 0;
    background: #fefefe;
`
